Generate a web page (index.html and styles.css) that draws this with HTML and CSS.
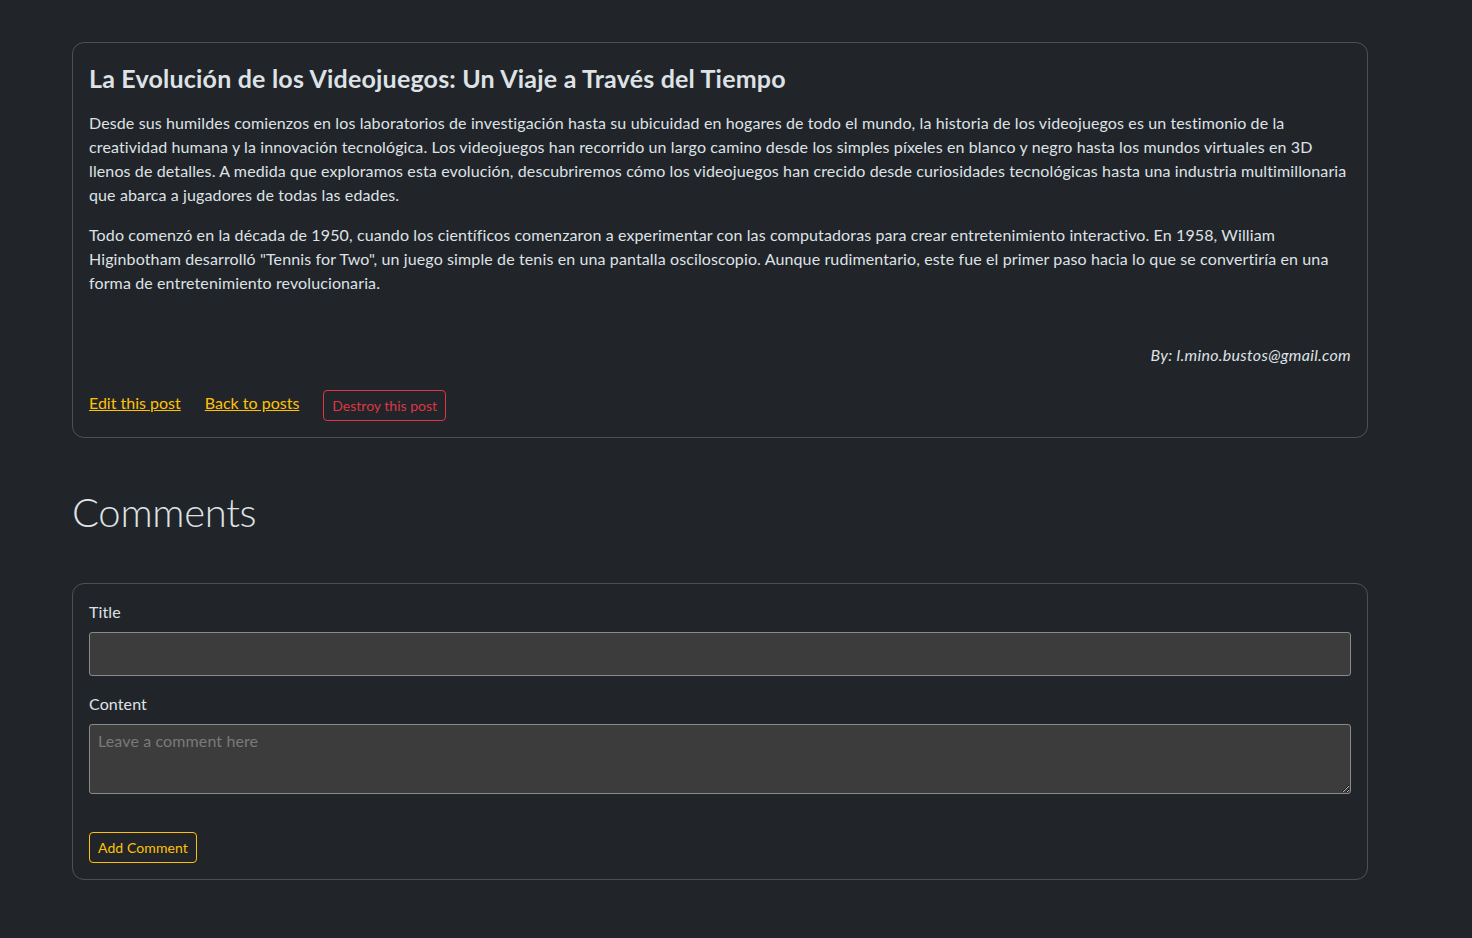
FILE: index.html
```html
<!DOCTYPE html>
<html lang="es">
<head>
<meta charset="utf-8">
<title>La Evolución de los Videojuegos</title>
<link rel="stylesheet" href="styles.css">
</head>
<body>
<main class="page">
  <article class="card post">
    <h3 class="post-title">La Evolución de los Videojuegos: Un Viaje a Través del Tiempo</h3>
    <p>Desde sus humildes comienzos en los laboratorios de investigación hasta su ubicuidad en hogares de todo el mundo, la historia de los videojuegos es un testimonio de la creatividad humana y la innovación tecnológica. Los videojuegos han recorrido un largo camino desde los simples píxeles en blanco y negro hasta los mundos virtuales en 3D llenos de detalles. A medida que exploramos esta evolución, descubriremos cómo los videojuegos han crecido desde curiosidades tecnológicas hasta una industria multimillonaria que abarca a jugadores de todas las edades.</p>
    <p>Todo comenzó en la década de 1950, cuando los científicos comenzaron a experimentar con las computadoras para crear entretenimiento interactivo. En 1958, William Higinbotham desarrolló "Tennis for Two", un juego simple de tenis en una pantalla osciloscopio. Aunque rudimentario, este fue el primer paso hacia lo que se convertiría en una forma de entretenimiento revolucionaria.</p>
    <p class="author">By: l.mino.bustos@gmail.com</p>
    <div class="actions">
      <a href="#" class="link">Edit this post</a>
      <a href="#" class="link">Back to posts</a>
      <button class="btn btn-danger" type="button">Destroy this post</button>
    </div>
  </article>

  <h1 class="comments-title">Comments</h1>

  <form class="card comment-form">
    <label class="label" for="title">Title</label>
    <input class="control" id="title" type="text">
    <label class="label" for="content">Content</label>
    <textarea class="control area" id="content" placeholder="Leave a comment here"></textarea>
    <button class="btn btn-warning" type="button">Add Comment</button>
  </form>
</main>
</body>
</html>
```

FILE: styles.css
```css
* { box-sizing: border-box; }
html, body { margin: 0; padding: 0; }
body {
  background: #212529;
  color: #dee2e6;
  font-family: "Lato", "Open Sans", "Noto Sans", sans-serif;
  font-size: 16px;
  line-height: 1.5;
  letter-spacing: 0.12px;
}
.page {
  width: 1296px;
  margin-left: 72px;
  padding-top: 42px;
  padding-bottom: 58px;
}
.card {
  border: 1px solid rgba(255, 255, 255, 0.2);
  border-radius: 12px;
  padding: 16px;
}
.post-title {
  margin: 0 0 18px;
  padding-top: 4px;
  font-size: 25px;
  font-weight: 700;
  line-height: 1.2;
  letter-spacing: 0.2px;
  color: #dee2e6;
}
.post p { margin: 0 0 16px; }
.post .author {
  text-align: right;
  font-style: italic;
  letter-spacing: 0.3px;
  margin: 48px 0 17px;
}
.actions {
  display: flex;
  align-items: center;
  gap: 24px;
  letter-spacing: 0;
}
.link {
  color: #ffc107;
  text-decoration: underline;
}
.btn {
  font-family: inherit;
  font-size: 14px;
  line-height: 1.5;
  letter-spacing: 0;
  padding: 4px 8px;
  border-radius: 4px;
  background: transparent;
  cursor: pointer;
}
.btn-danger {
  color: #dc3545;
  border: 1px solid #dc3545;
  margin-top: 6px;
}
.btn-warning {
  color: #ffc107;
  border: 1px solid #ffc107;
  margin-top: 38px;
  letter-spacing: 0.1px;
}
.comments-title {
  font-size: 40px;
  font-weight: 300;
  line-height: 1.2;
  letter-spacing: -0.3px;
  margin: 50px 0 47px;
  color: #dee2e6;
}
.comment-form {
  display: flex;
  flex-direction: column;
  align-items: flex-start;
}
.label {
  display: block;
  margin-bottom: 8px;
}
.control {
  display: block;
  width: 100%;
  height: 44px;
  background: #3c3c3c;
  border: 1px solid #8a8a8a;
  border-radius: 3px;
  color: #dee2e6;
  font-family: inherit;
  font-size: 16px;
  letter-spacing: 0.12px;
  padding: 6px 8px;
  margin-bottom: 16px;
}
.area {
  height: 70px;
  margin-bottom: 0;
  resize: vertical;
}
.area::placeholder { color: #7a7a7a; }
```
